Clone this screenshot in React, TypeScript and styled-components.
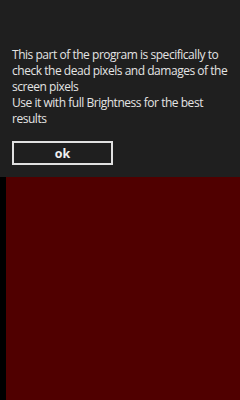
import styled, { createGlobalStyle } from "styled-components"

const GlobalStyle = createGlobalStyle`
  html, body {
    margin: 0;
    padding: 0;
    background: #000;
  }
  body {
    font-family: "Open Sans", "Noto Sans", sans-serif;
  }
`

const Screen = styled.div`
  width: 240px;
  height: 400px;
  display: flex;
  flex-direction: column;
  background: #000;
  overflow: hidden;
`

const Dialog = styled.div`
  height: 177px;
  box-sizing: border-box;
  background: #1f1f1f;
  padding: 47px 8px 0 12px;
  display: flex;
  flex-direction: column;
`

const Message = styled.p`
  margin: 0;
  color: #e4e4e4;
  font-size: 12px;
  line-height: 16px;
  letter-spacing: -0.47px;
`

const OkButton = styled.button`
  margin-top: 14px;
  width: 101px;
  height: 24px;
  box-sizing: border-box;
  border: 2px solid #e0e0e0;
  background: transparent;
  color: #f0f0f0;
  font-family: "Open Sans", "Noto Sans", sans-serif;
  font-weight: 700;
  font-size: 12.5px;
  padding: 0;
  display: flex;
  align-items: center;
  justify-content: center;
`

const TestArea = styled.div`
  flex: 1;
  display: flex;
`

const Gutter = styled.div`
  width: 6px;
  background: #000;
`

const RedField = styled.div`
  flex: 1;
  background: #500000;
`

export default function App() {
  return (
    <>
      <GlobalStyle />
      <Screen>
        <Dialog>
          <Message>
            This part of the program is specifically to check the dead pixels and damages of the screen pixels
            <br />
            Use it with full Brightness for the best results
          </Message>
          <OkButton>ok</OkButton>
        </Dialog>
        <TestArea>
          <Gutter />
          <RedField />
        </TestArea>
      </Screen>
    </>
  )
}
